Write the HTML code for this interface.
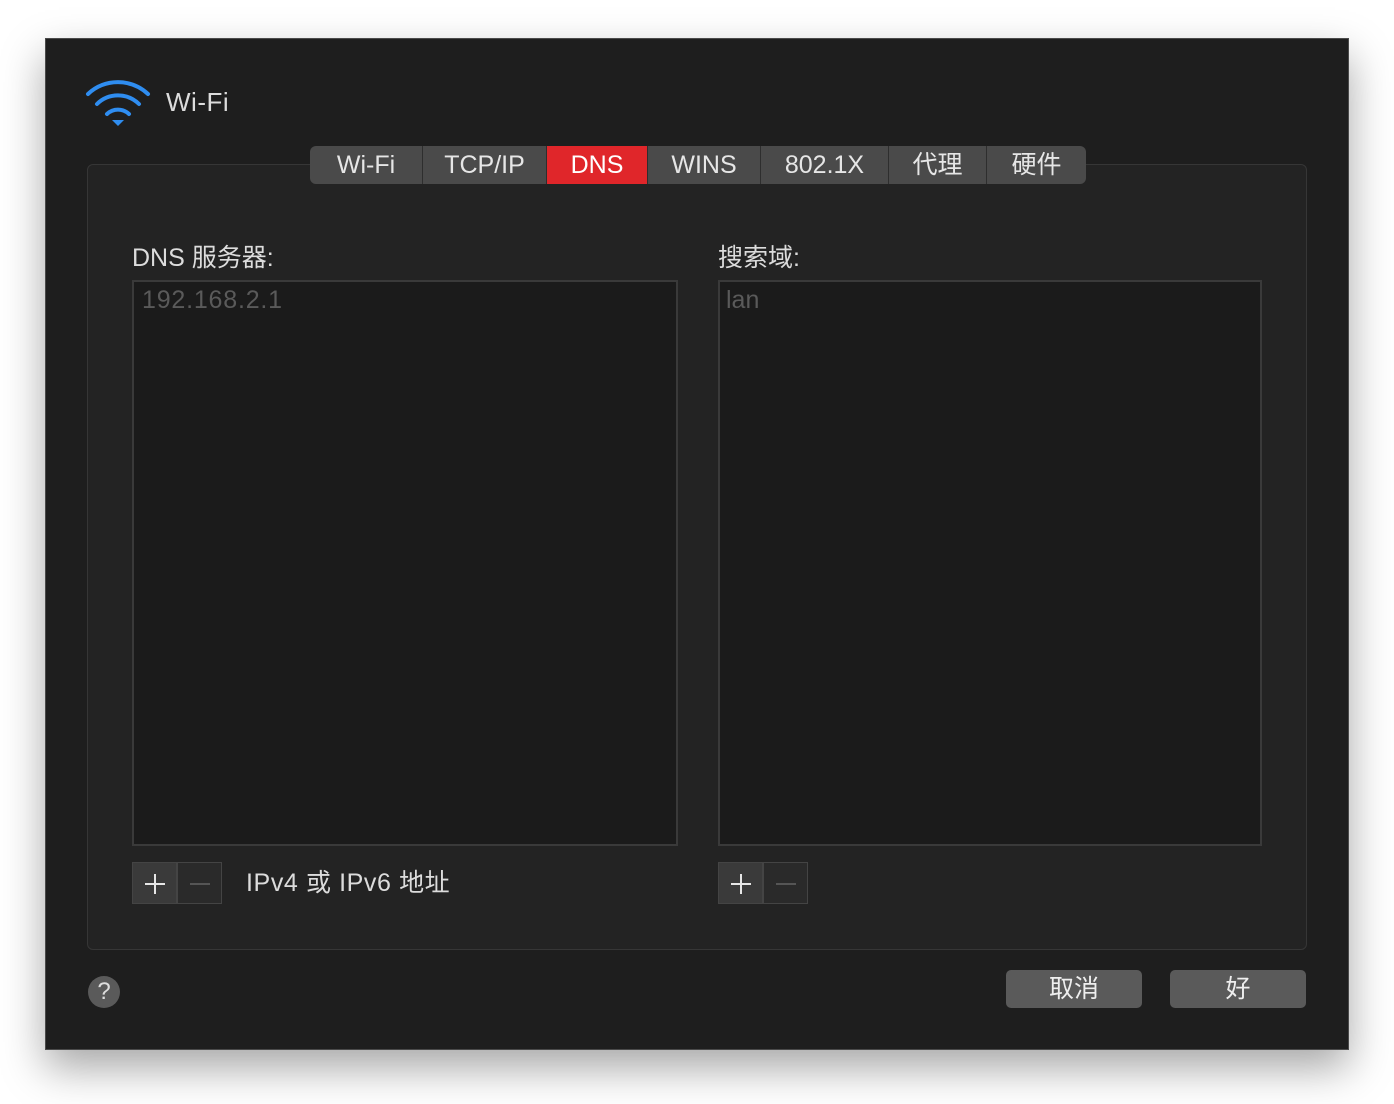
<!DOCTYPE html><html><head><meta charset="utf-8"><style>
body{margin:0;width:1394px;height:1104px;background:#fff;position:relative;overflow:hidden;font-family:"Liberation Sans","Noto Sans CJK SC",sans-serif;color:#dcdcdc}
.a{position:absolute;box-sizing:border-box}
.win{left:45px;top:38px;width:1304px;height:1012px;background:#1e1e1e;border:1px solid #4a4a4a;box-shadow:0 18px 40px rgba(0,0,0,.35)}
.tab{top:146px;height:38px;background:#4a4a4a;font-size:25px;line-height:38px;text-align:center;color:#e6e6e6;border-right:1px solid #2e2e2e}
.list{background:#1b1b1b;border:2px solid #3a3a3a;top:280px;height:566px}
.btn{top:862px;width:45px;height:42px;border:1px solid #444}
.pb{top:970px;height:38px;background:#5a5a5a;border-radius:5px;font-size:25px;line-height:38px;text-align:center;color:#eee}
</style></head><body>
<div class="a win"></div>
<svg class="a" style="left:84px;top:78px" width="68" height="50" viewBox="0 0 68 50"><g fill="none" stroke="#2f8df0" stroke-width="4" stroke-linecap="round"><path d="M4 16 A44 44 0 0 1 64 16"/><path d="M13 26 A30 30 0 0 1 55 26"/><path d="M23 36 A16 16 0 0 1 45 36"/></g><path d="M28 42 L40 42 L34 48Z" fill="#2f8df0"/></svg>
<div class="a" style="left:166px;top:87px;font-size:26px;letter-spacing:0.5px">Wi-Fi</div>
<div class="a" style="left:87px;top:164px;width:1220px;height:786px;background:#232323;border:1px solid #363636;border-radius:6px"></div>
<div class="a tab" style="left:310px;width:113px;border-radius:6px 0 0 6px">Wi-Fi</div>
<div class="a tab" style="left:423px;width:124px">TCP/IP</div>
<div class="a tab" style="left:547px;width:101px;background:#e0262a;color:#fff">DNS</div>
<div class="a tab" style="left:648px;width:113px">WINS</div>
<div class="a tab" style="left:761px;width:128px">802.1X</div>
<div class="a tab" style="left:889px;width:98px">代理</div>
<div class="a tab" style="left:987px;width:99px;border-radius:0 6px 6px 0;border:0">硬件</div>
<div class="a" style="left:132px;top:238px;font-size:25px">DNS 服务器:</div>
<div class="a" style="left:718px;top:238px;font-size:25px">搜索域:</div>
<div class="a list" style="left:132px;width:546px"></div>
<div class="a list" style="left:718px;width:544px"></div>
<div class="a" style="left:142px;top:286px;font-size:25px;color:#5a5a5a;letter-spacing:0.8px">192.168.2.1</div>
<div class="a" style="left:726px;top:286px;font-size:25px;color:#5a5a5a">lan</div>
<div class="a btn" style="left:132px;background:#3a3a3a"><svg width="45" height="42"><path d="M22 11V31M12 21H32" stroke="#e6e6e6" stroke-width="2"/></svg></div>
<div class="a btn" style="left:177px;background:#2a2a2a"><svg width="45" height="42"><path d="M12 21H32" stroke="#555" stroke-width="2"/></svg></div>
<div class="a btn" style="left:718px;background:#3a3a3a"><svg width="45" height="42"><path d="M22 11V31M12 21H32" stroke="#e6e6e6" stroke-width="2"/></svg></div>
<div class="a btn" style="left:763px;background:#2a2a2a"><svg width="45" height="42"><path d="M12 21H32" stroke="#555" stroke-width="2"/></svg></div>
<div class="a" style="left:246px;top:863px;font-size:25px;letter-spacing:0.6px">IPv4 或 IPv6 地址</div>
<div class="a" style="left:88px;top:976px;width:32px;height:32px;border-radius:50%;background:#5a5a5a;color:#ddd;font-size:24px;line-height:32px;text-align:center">?</div>
<div class="a pb" style="left:1006px;width:136px">取消</div>
<div class="a pb" style="left:1170px;width:136px">好</div>
</body></html>
